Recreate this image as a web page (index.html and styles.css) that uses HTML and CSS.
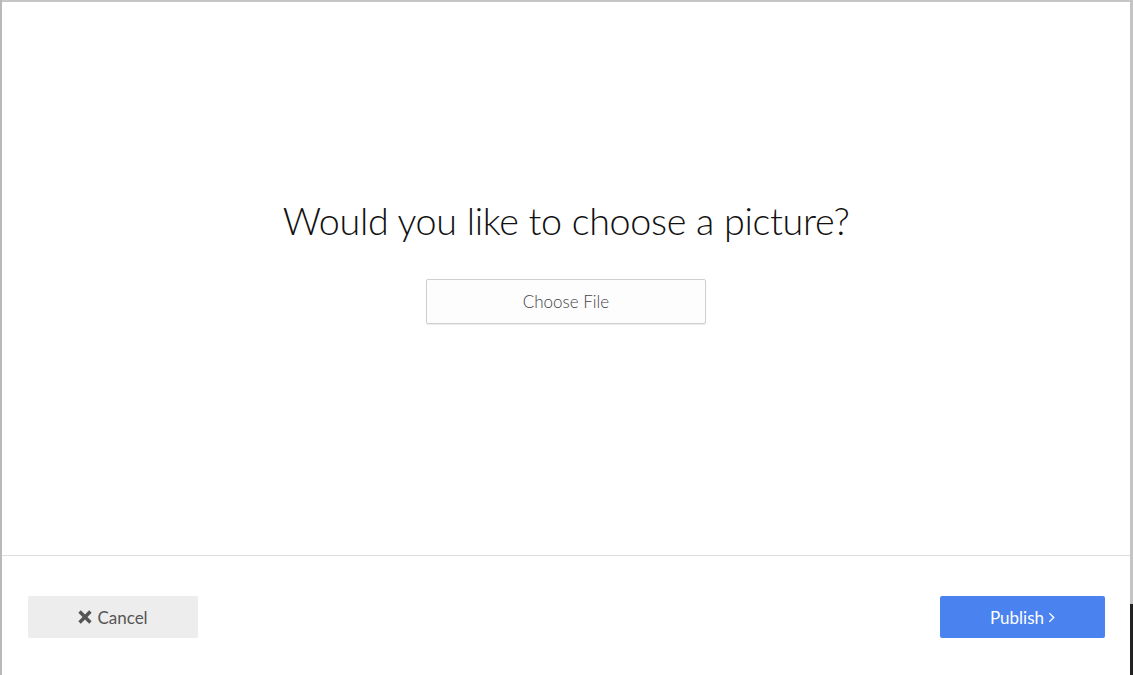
FILE: index.html
```html
<!DOCTYPE html>
<html>
<head>
<meta charset="utf-8">
<link rel="stylesheet" href="styles.css">
</head>
<body>
<div class="page">
  <div class="modal">
    <div class="modal-body">
      <h1 class="title">Would you like to choose a picture?</h1>
      <button class="file-btn">Choose File</button>
    </div>
    <div class="modal-footer">
      <button class="btn btn-cancel"><svg class="x-icon" viewBox="0 0 12 12" width="14" height="14"><path d="M2.4 0.3 L6 3.9 L9.6 0.3 L11.7 2.4 L8.1 6 L11.7 9.6 L9.6 11.7 L6 8.1 L2.4 11.7 L0.3 9.6 L3.9 6 L0.3 2.4 Z" fill="#555"/></svg>Cancel</button>
      <button class="btn btn-publish">Publish<svg class="chev" viewBox="0 0 8 12" width="7" height="11"><path d="M1.5 1 L6.5 6 L1.5 11" fill="none" stroke="#fff" stroke-width="1.6"/></svg></button>
    </div>
  </div>
  <div class="edge"></div>
</div>
</body>
</html>
```
FILE: styles.css
```css
html, body {
  margin: 0;
  padding: 0;
  background: #fff;
  height: 675px;
  overflow: hidden;
}
body {
  font-family: "Source Sans Pro", Lato, "Open Sans", sans-serif;
}
.page {
  display: flex;
  height: 675px;
  border-left: 2px solid #b9b9b9;
  box-sizing: border-box;
}
.modal {
  flex: 1;
  display: flex;
  flex-direction: column;
  border-top: 2px solid #c6c6c6;
  background: #fff;
}
.edge {
  width: 3px;
  background: linear-gradient(to bottom, #c4c4c4 0, #c4c4c4 604px, #222 604px, #222 100%);
}
.modal-body {
  display: flex;
  flex-direction: column;
  align-items: center;
  border-bottom: 1px solid #dedede;
  box-sizing: border-box;
  height: 554px;
}
.title {
  margin: 195px 0 0 0;
  font-weight: 300;
  font-size: 37.7px;
  line-height: 48px;
  color: #111;
  letter-spacing: -0.3px;
}
.file-btn {
  margin-top: 34px;
  width: 280px;
  height: 45px;
  background: #fdfdfd;
  border: 1px solid #cfcfcf;
  border-radius: 2px;
  box-shadow: 0 1px 1px rgba(0,0,0,0.08);
  font-family: inherit;
  font-weight: 300;
  font-size: 17px;
  color: #444;
  padding: 0;
}
.modal-footer {
  display: flex;
  justify-content: space-between;
  align-items: flex-start;
  padding: 40px 25px 0 26px;
}
.btn {
  height: 42px;
  border: none;
  border-radius: 2px;
  font-family: inherit;
  font-size: 17px;
  display: inline-flex;
  align-items: center;
  justify-content: center;
  padding: 0;
}
.btn-cancel {
  width: 170px;
  background: #ededed;
  color: #555;
}
.x-icon {
  margin-right: 5px;
}
.btn-publish {
  width: 165px;
  background: #4a82f0;
  color: #fff;
}
.chev {
  margin-left: 4px;
}
```
